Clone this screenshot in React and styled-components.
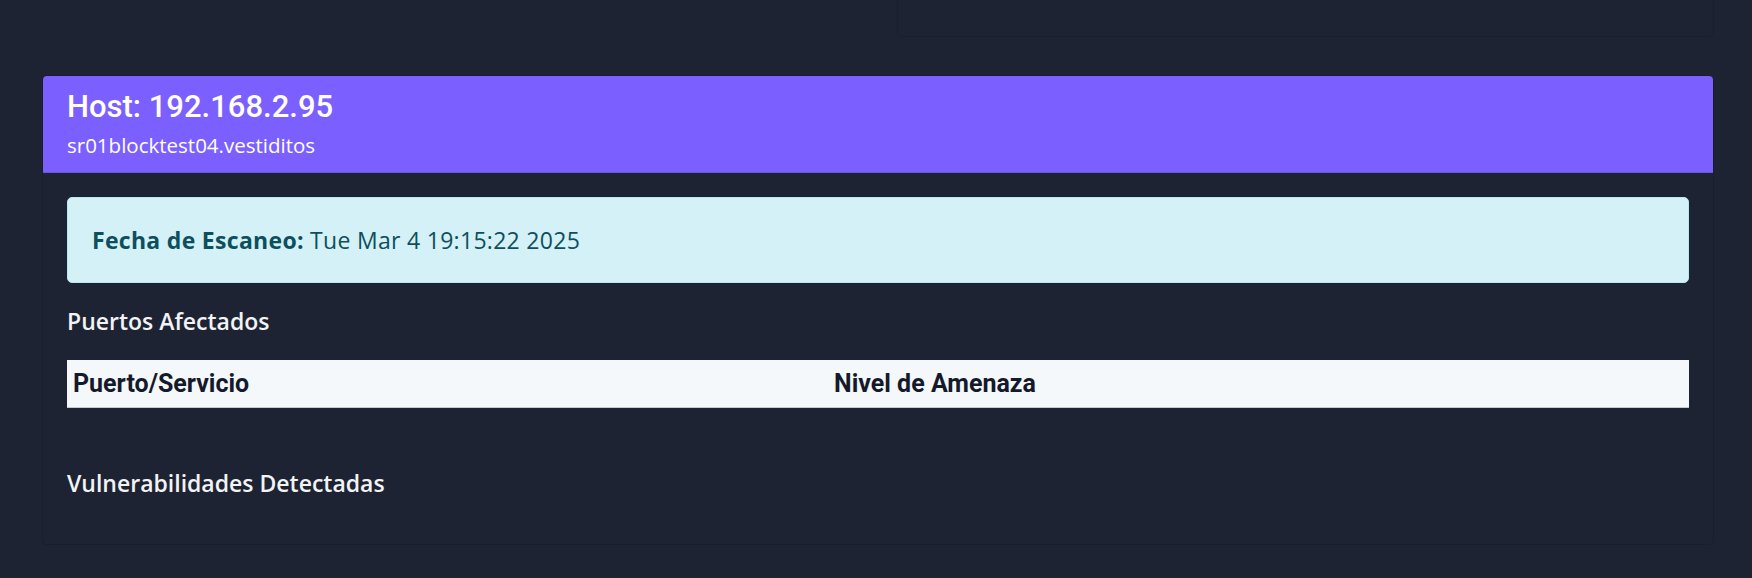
import React from "react";
import styled, { createGlobalStyle } from "styled-components";

const GlobalStyle = createGlobalStyle`
  body {
    margin: 0;
    background-color: #1e2333;
    font-family: "Open Sans", Roboto, "Liberation Sans", sans-serif;
    color: #f1f3f5;
  }
`;

const Page = styled.div`
  padding: 0 38px 32px 42px;
`;

const PrevCard = styled.div`
  margin-left: auto;
  width: 817px;
  height: 37px;
  border: 1px solid rgba(0, 0, 0, 0.1);
  border-top: none;
  border-radius: 0 0 5px 5px;
  box-sizing: border-box;
`;

const Card = styled.div`
  margin-top: 38px;
  border: 1px solid rgba(0, 0, 0, 0.12);
  border-radius: 5px;
  overflow: hidden;
`;

const CardHeader = styled.div`
  background-color: #7b60ff;
  padding: 13px 24px 13px;
  border-bottom: 1px solid rgba(0, 0, 0, 0.12);
  color: #ffffff;
`;

const HostTitle = styled.h3`
  margin: 0;
  font-family: Roboto, "Liberation Sans", sans-serif;
  font-size: 31px;
  line-height: 36px;
  font-weight: 500;
`;

const HostName = styled.div`
  margin-top: 6px;
  font-size: 20.5px;
  line-height: 28px;
`;

const CardBody = styled.div`
  padding: 24px 24px 47px;
`;

const Alert = styled.div`
  background-color: #d3f1f7;
  border: 1px solid #b6e9f4;
  border-radius: 5px;
  padding: 24px;
  font-size: 23px;
  line-height: 36px;
  letter-spacing: 0.3px;
  color: #0d4f5c;

  strong {
    font-weight: 700;
  }
`;

const SectionTitle = styled.h5`
  margin: ${(p) => p.$top}px 0 0;
  font-size: 23px;
  line-height: 28px;
  font-weight: 600;
  color: #f1f3f5;
`;

const Table = styled.table`
  width: 100%;
  margin-top: 25px;
  border-collapse: collapse;
`;

const Th = styled.th`
  width: ${(p) => p.$width || "auto"};
  padding: 6px 6px 5px;
  background-color: #f4f8fb;
  border-bottom: 1px solid #c6c9d1;
  text-align: left;
  font-family: Roboto, "Liberation Sans", sans-serif;
  font-size: 25px;
  line-height: 36px;
  font-weight: 700;
  color: #141a2b;
`;

export default function App() {
  return (
    <>
      <GlobalStyle />
      <Page>
        <PrevCard />
        <Card>
          <CardHeader>
            <HostTitle>Host: 192.168.2.95</HostTitle>
            <HostName>sr01blocktest04.vestiditos</HostName>
          </CardHeader>
          <CardBody>
            <Alert>
              <strong>Fecha de Escaneo:</strong> Tue Mar 4 19:15:22 2025
            </Alert>
            <SectionTitle $top={24}>Puertos Afectados</SectionTitle>
            <Table>
              <thead>
                <tr>
                  <Th $width="749px">Puerto/Servicio</Th>
                  <Th>Nivel de Amenaza</Th>
                </tr>
              </thead>
              <tbody />
            </Table>
            <SectionTitle $top={61}>Vulnerabilidades Detectadas</SectionTitle>
          </CardBody>
        </Card>
      </Page>
    </>
  );
}
